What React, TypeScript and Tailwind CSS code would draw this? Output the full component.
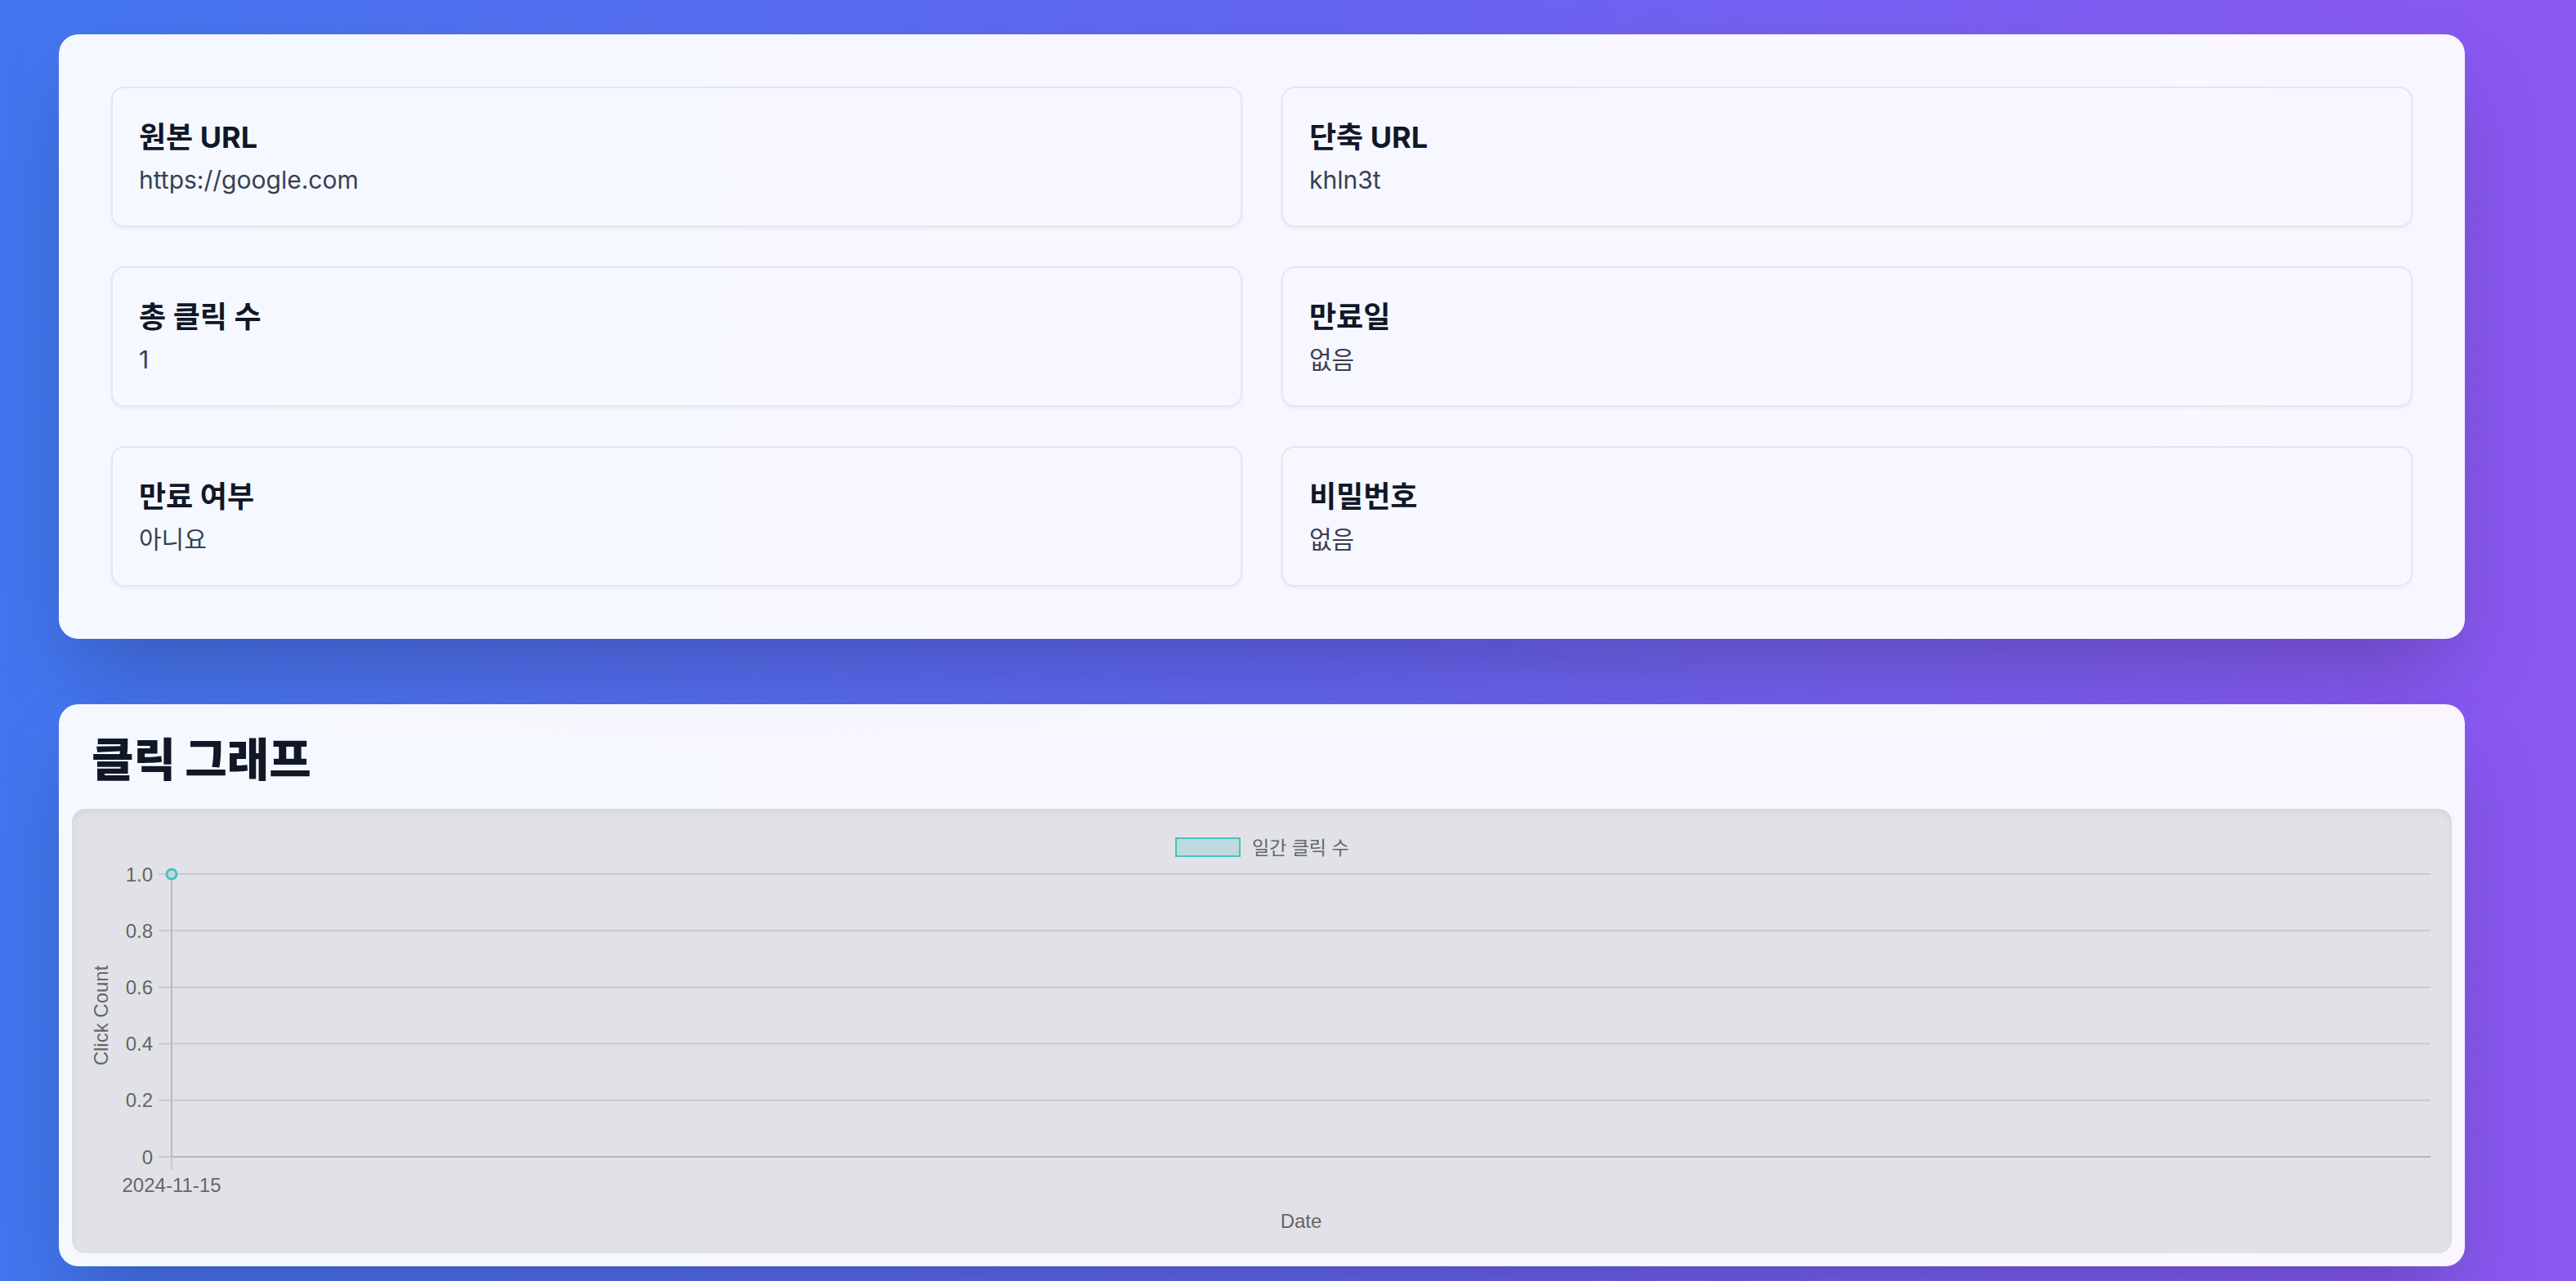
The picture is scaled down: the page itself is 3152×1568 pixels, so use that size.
const INFO = [
  { label: "원본 URL", value: "https://google.com" },
  { label: "단축 URL", value: "khln3t" },
  { label: "총 클릭 수", value: "1" },
  { label: "만료일", value: "없음" },
  { label: "만료 여부", value: "아니요" },
  { label: "비밀번호", value: "없음" },
];

// chart geometry (px inside the chart panel)
const AXIS_X = 122;
const TOP_Y = 80;
const ZERO_Y = 426;
const RIGHT_X = 2886;
const TICKS = ["1.0", "0.8", "0.6", "0.4", "0.2", "0"];

function ClickChart() {
  const step = (ZERO_Y - TOP_Y) / (TICKS.length - 1);
  const chartFont = "'Liberation Sans', 'Noto Sans CJK KR', Arial, sans-serif";
  return (
    <svg width="100%" height="544" viewBox="0 0 2912 544" style={{ fontFamily: chartFont }}>
      {/* legend */}
      <rect x="1351" y="36" width="78" height="22" fill="#bedadf" stroke="#4bc0c0" strokeWidth="2" />
      <text x="1444" y="48" fontSize="23" fill="#666" dominantBaseline="central">
        일간 클릭 수
      </text>

      {/* grid + y labels */}
      {TICKS.map((t, i) => {
        const y = TOP_Y + i * step;
        const isZero = i === TICKS.length - 1;
        return (
          <g key={t}>
            <line x1="106" x2={AXIS_X} y1={y} y2={y} stroke="#c9c9ce" strokeWidth="2" />
            <line
              x1={AXIS_X}
              x2={RIGHT_X}
              y1={y}
              y2={y}
              stroke={isZero ? "#b5b5ba" : "#c9c9ce"}
              strokeWidth="2"
            />
            <text x="99" y={y} fontSize="24" fill="#666" textAnchor="end" dominantBaseline="central">
              {t}
            </text>
          </g>
        );
      })}

      {/* y axis line + x tick */}
      <line x1={AXIS_X} x2={AXIS_X} y1={TOP_Y} y2={ZERO_Y} stroke="#b9b9be" strokeWidth="2" />
      <line x1={AXIS_X} x2={AXIS_X} y1={ZERO_Y} y2={442} stroke="#c9c9ce" strokeWidth="2" />

      {/* axis titles */}
      <text
        x="44"
        y="253"
        fontSize="24"
        fill="#666"
        textAnchor="middle"
        transform="rotate(-90 44 253)"
      >
        Click Count
      </text>
      <text x={AXIS_X} y="469" fontSize="24" fill="#666" textAnchor="middle">
        2024-11-15
      </text>
      <text x="1504" y="513" fontSize="24" fill="#666" textAnchor="middle">
        Date
      </text>

      {/* data point */}
      <circle cx={AXIS_X} cy={TOP_Y} r="6" fill="#bedadf" stroke="#4bc0c0" strokeWidth="3" />
    </svg>
  );
}

export default function App() {
  return (
    <main className="min-h-screen bg-linear-to-r from-[#4176ef] via-[#6366f1] to-[#8b57f1] pt-[42px] pl-[72px] pr-[136px] pb-[40px] font-['Inter','Noto_Sans_CJK_KR',sans-serif]">
      <section className="rounded-[24px] bg-white/95 p-16 shadow-[0_50px_100px_-24px_rgba(0,0,0,0.25)]">
        <div className="grid grid-cols-2 gap-12">
          {INFO.map((item) => (
            <div
              key={item.label}
              className="rounded-[16px] border-2 border-[#e5e7eb] px-8 py-8 shadow-[0_2px_4px_rgba(0,0,0,0.05)]"
            >
              <h3 className="text-[36px] leading-[56px] font-bold text-gray-900">{item.label}</h3>
              <p className="text-[30px] leading-[48px] text-gray-700">{item.value}</p>
            </div>
          ))}
        </div>
      </section>

      <section className="mt-[80px] rounded-[24px] bg-white/95 p-4 shadow-[0_50px_100px_-24px_rgba(0,0,0,0.25)]">
        <h2 className="px-6 pt-4 pb-6 text-[56px] leading-[72px] font-black text-gray-900">
          클릭 그래프
        </h2>
        <div className="h-[544px] rounded-[16px] bg-[#e1e2e7] shadow-[inset_0_4px_8px_rgba(0,0,0,0.06)]">
          <ClickChart />
        </div>
      </section>
    </main>
  );
}
